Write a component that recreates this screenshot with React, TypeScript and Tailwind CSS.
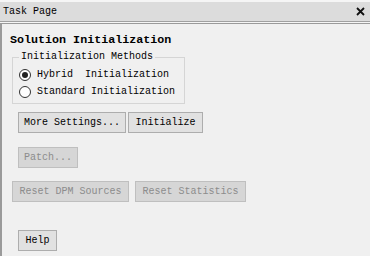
import React from "react";

const mono = { fontFamily: '"Liberation Mono", "DejaVu Sans Mono", monospace' };

interface BtnProps {
  label: string
  width: string
  disabled?: boolean
}

const Btn = ({ label, width, disabled }: BtnProps) => (
  <button
    disabled={disabled}
    className={
      disabled
        ? `${width} h-[21px] border border-[#bfbfbf] bg-[#d6d6d6] text-[10px] leading-[19px] text-[#8c8c8c] text-center`
        : `${width} h-[21px] border border-[#adadad] bg-[#e1e1e1] text-[10px] leading-[19px] text-black text-center`
    }
    style={mono}
  >
    {label}
  </button>
);

const Radio = ({ label, checked }: { label: string; checked?: boolean }) => (
  <div className="flex h-[17px] items-center gap-[6px]">
    <div className="flex h-[12px] w-[12px] items-center justify-center rounded-full border border-[#333333] bg-white">
      {checked && <div className="h-[6px] w-[6px] rounded-full bg-[#222222]" />}
    </div>
    <span className="text-[10px] leading-[12px] text-black whitespace-pre">{label}</span>
  </div>
);

export default function App() {
  return (
    <div className="w-[370px] h-[256px] overflow-hidden bg-[#f5f5f5]" style={mono}>
      <div className="mt-[2px] flex h-[20px] items-center justify-between border-b border-[#a0a0a0] bg-[#dcdcdc] pl-[3px] pr-[5px]">
        <span className="text-[10px] leading-[12px] text-black">Task Page</span>
        <svg width="9" height="9" viewBox="0 0 9 9">
          <path d="M1 1 L8 8 M8 1 L1 8" stroke="#111" strokeWidth="1.8" />
        </svg>
      </div>
      <div className="mt-[1px] h-[240px] border-t border-l-2 border-[#9a9a9a] bg-[#f0f0f0] pl-[8px]">
        <div className="mt-[9px] text-[11.7px] font-bold leading-[14px] text-black">Solution Initialization</div>
        <fieldset className="ml-[2px] mt-[4px] w-[173px] border border-[#d5d5d5] pl-[6px] pb-[3px]">
          <legend className="px-[2px] text-[10px] leading-[12px] text-black">Initialization Methods</legend>
          <div className="mt-[3px]">
            <Radio label="Hybrid  Initialization" checked />
            <Radio label="Standard Initialization" />
          </div>
        </fieldset>
        <div className="ml-[8px] mt-[8px] flex gap-[2px]">
          <Btn label="More Settings..." width="w-[108px]" />
          <Btn label="Initialize" width="w-[75px]" />
        </div>
        <div className="ml-[8px] mt-[14px] flex">
          <Btn label="Patch..." width="w-[60px]" disabled />
        </div>
        <div className="ml-[2px] mt-[13px] flex gap-[6px]">
          <Btn label="Reset DPM Sources" width="w-[117px]" disabled />
          <Btn label="Reset Statistics" width="w-[111px]" disabled />
        </div>
        <div className="ml-[8px] mt-[28px] flex">
          <Btn label="Help" width="w-[39px]" />
        </div>
      </div>
    </div>
  );
}
